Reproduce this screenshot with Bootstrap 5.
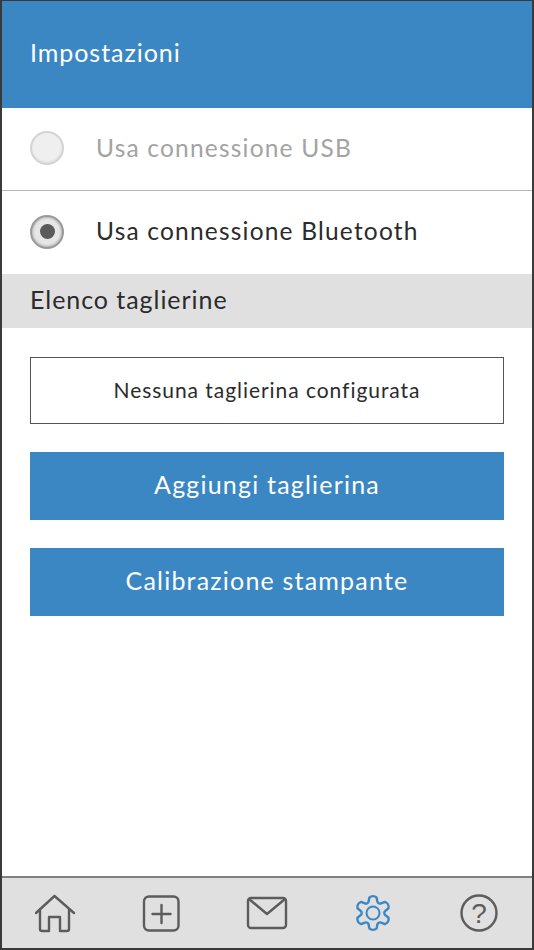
<!DOCTYPE html>
<html lang="it">
<head>
  <meta charset="UTF-8">
  <title>Impostazioni</title>
  <link href="https://cdn.jsdelivr.net/npm/bootstrap@5.3.0/dist/css/bootstrap.min.css" rel="stylesheet">
  <style>
    html, body { height: 100%; }
    body { font-family: Lato, "Liberation Sans", sans-serif; color: #2b2b2b; background: #fff; }
    .schermo { height: 950px; border: 2px solid #3a3a3a; border-top-width: 1px; }
    .testata { height: 107px; background: #3a87c4; color: #fff; font-size: 25px; letter-spacing: .95px; padding: 0 0 4px 28px; }
    .riga-radio { height: 83px; padding: 0 0 2px 28px; gap: 32px; font-size: 24.5px; letter-spacing: 1.2px; }
    .riga-radio.spenta { color: #a3a3a3; border-bottom: 1px solid #b8b8b8; }
    .pallino { width: 34px; height: 34px; border-radius: 50%; background: #efefef; border: 2px solid #d4d4d4; box-shadow: inset 0 -1px 2px #ddd; }
    .pallino.attivo { background: #e6e6e6; border-color: #9a9a9a; box-shadow: inset 0 0 3px #888; }
    .pallino.attivo span { width: 15px; height: 15px; border-radius: 50%; background: #5a5a5a; }
    .sezione { height: 54px; background: #e0e0e0; font-size: 25px; letter-spacing: .95px; padding: 0 0 2px 28px; }
    .contenuto { padding: 29px 28px 0; gap: 28px; }
    .avviso { height: 67px; border: 1px solid #555; font-size: 21px; letter-spacing: .95px; padding-bottom: 2px; }
    .bottone { height: 68px; background: #3a87c4; color: #fff; font-size: 25px; letter-spacing: 1.2px; border: 0; border-radius: 0; padding-bottom: 8px; }
    .bottone:hover { background: #3a87c4; color: #fff; }
    .barra { height: 72px; background: #e0e0e0; border-top: 2px solid #808080; padding: 0 33px; }
    .barra svg { width: 42px; height: 42px; fill: none; stroke: #5c5c5c; stroke-width: 2.4; stroke-linecap: round; stroke-linejoin: round; }
    .barra svg.attiva { stroke: #3a87c4; }
    .barra svg.attiva path { stroke-width: 2.700; }
    .barra svg.attiva circle { stroke-width: 2; }
    .barra text { fill: #5c5c5c; stroke: none; font: 400 28px "Liberation Sans", sans-serif; }
  </style>
</head>
<body>
  <div class="schermo d-flex flex-column">
    <div class="testata d-flex align-items-center">Impostazioni</div>

    <!-- Tipo di connessione -->
    <div class="riga-radio spenta d-flex align-items-center">
      <div class="pallino"></div>
      <div>Usa connessione USB</div>
    </div>
    <div class="riga-radio d-flex align-items-center">
      <div class="pallino attivo d-flex align-items-center justify-content-center"><span></span></div>
      <div>Usa connessione Bluetooth</div>
    </div>

    <div class="sezione d-flex align-items-center">Elenco taglierine</div>

    <div class="contenuto d-flex flex-column flex-grow-1">
      <div class="avviso d-flex align-items-center justify-content-center">Nessuna taglierina configurata</div>
      <button class="btn bottone" type="button">Aggiungi taglierina</button>
      <button class="btn bottone" type="button">Calibrazione stampante</button>
    </div>

    <!-- Barra in basso -->
    <nav class="barra d-flex align-items-center justify-content-between">
      <svg viewBox="0 0 42 42"><path d="M1 21 19.500 4 39 21M5 17v20a2 2 0 0 0 2 2h7V25h11v14h7a2 2 0 0 0 2-2V17"/></svg>
      <svg viewBox="0 0 42 42"><rect x="3" y="4.500" width="34.500" height="34" rx="5"/><path d="M20.500 13v18M11.500 22h18"/></svg>
      <svg viewBox="0 0 42 42"><rect x="2" y="6" width="38" height="30" rx="3"/><path d="M3 7 21 22 39 7"/></svg>
      <svg class="attiva" viewBox="0 0 42 42"><path transform="translate(21 21) scale(.9) translate(-21 -21)" d="M16.210 7.840 16.950 3.900A6 6 0 0 1 25.050 3.900L25.790 7.840A3 3 0 0 0 30 10.280L34.160 8.720A6 6 0 0 1 38.210 15.740L34.790 18.570A3 3 0 0 0 34.790 23.430L38.210 26.260A6 6 0 0 1 34.160 33.280L30 31.720A3 3 0 0 0 25.790 34.160L25.050 38.100A6 6 0 0 1 16.950 38.100L16.210 34.160A3 3 0 0 0 12 31.720L7.840 33.280A6 6 0 0 1 3.790 26.260L7.210 23.430A3 3 0 0 0 7.210 18.570L3.790 15.740A6 6 0 0 1 7.840 8.720L12 10.280A3 3 0 0 0 16.210 7.840Z"/><circle cx="21" cy="21" r="6.500"/></svg>
      <svg viewBox="0 0 42 42"><circle cx="22" cy="21" r="17.500"/><text x="22" y="31" text-anchor="middle">?</text></svg>
    </nav>
  </div>
  <script src="https://cdn.jsdelivr.net/npm/bootstrap@5.3.0/dist/js/bootstrap.bundle.min.js"></script>
</body>
</html>
